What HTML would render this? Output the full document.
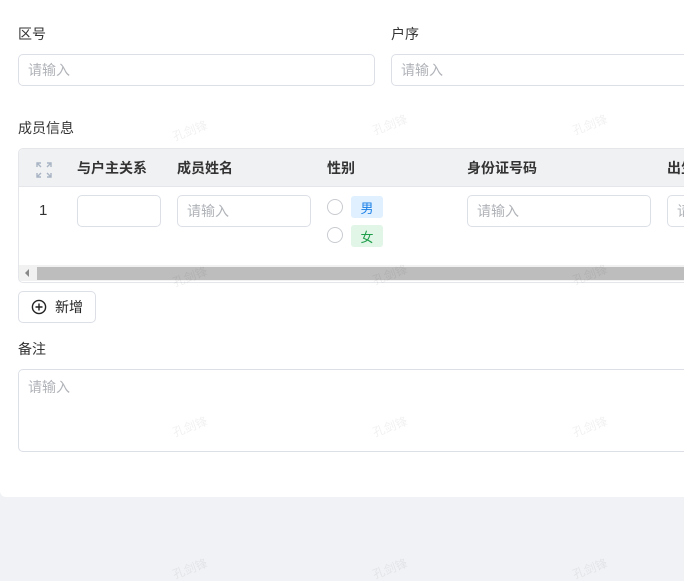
<!DOCTYPE html>
<html><head><meta charset="utf-8"><style>
*{box-sizing:border-box;margin:0;padding:0}
html,body{width:684px;height:581px;overflow:hidden}
body{background:#f0f2f5;font-family:"Liberation Sans","Noto Sans CJK SC",sans-serif;font-size:14px;color:#333}
#wrap{position:relative;width:684px;height:581px;overflow:hidden}
.card{position:absolute;left:0;top:0;width:684px;height:497px;background:#fff;border-radius:0 0 0 6px}
.abs{position:absolute}
.lbl{position:absolute;font-size:14px;color:#333;line-height:20px;white-space:nowrap}
.inp{position:absolute;border:1px solid #dcdfe6;border-radius:5px;background:#fff;color:#b0b3b8;font-size:14px;padding-left:9px;display:flex;align-items:center;white-space:nowrap;overflow:hidden}
.th{position:absolute;top:158px;font-weight:bold;font-size:14px;color:#333;line-height:20px;white-space:nowrap}
.radio{position:absolute;left:327px;width:16px;height:16px;border:1px solid #c8cbd0;border-radius:50%;background:#fff}
.tag{position:absolute;left:351px;width:32px;height:22px;border-radius:3px;font-size:13px;display:flex;align-items:center;justify-content:center}
.wm{position:absolute;color:rgba(0,0,0,0.06);font-size:12px;transform:rotate(-20deg);white-space:nowrap}
</style></head><body><div id="wrap">
<div class="card"></div>
<div class="lbl" style="left:18px;top:24px">区号</div>
<div class="inp" style="left:18px;top:54px;width:357px;height:32px">请输入</div>
<div class="lbl" style="left:391px;top:24px">户序</div>
<div class="inp" style="left:391px;top:54px;width:320px;height:32px">请输入</div>
<div class="lbl" style="left:18px;top:118px">成员信息</div>

<div class="abs" style="left:18px;top:148px;width:700px;height:135px;border:1px solid #e4e6ea;border-radius:5px;overflow:hidden;background:#fff">
  <div class="abs" style="left:0;top:0;width:700px;height:38px;background:#f0f1f3;border-bottom:1px solid #e4e6ea"></div>
  <div class="abs" style="left:0;top:116px;width:700px;height:16px;background:#f1f1f1"></div>
  <div class="abs" style="left:18px;top:118px;width:700px;height:13px;background:#bdbdbd"></div>
  <div class="abs" style="left:6px;top:120px;width:0;height:0;border-top:4px solid transparent;border-bottom:4px solid transparent;border-right:4px solid #888"></div>
</div>
<svg class="abs" style="left:36px;top:162px" width="16" height="16" viewBox="0 0 16 16" fill="none" stroke="#a8b4c4" stroke-width="1.4">
<path d="M1 5V1h4M1 1l4 4M11 1h4v4M15 1l-4 4M1 11v4h4M1 15l4-4M15 11v4h-4M15 15l-4-4"/></svg>
<div class="th" style="left:77px">与户主关系</div>
<div class="th" style="left:177px">成员姓名</div>
<div class="th" style="left:327px">性别</div>
<div class="th" style="left:467px">身份证号码</div>
<div class="th" style="left:667px">出生日期</div>

<div class="lbl" style="left:39px;top:201px;font-size:15px">1</div>
<div class="inp" style="left:77px;top:195px;width:84px;height:32px"></div>
<div class="inp" style="left:177px;top:195px;width:134px;height:32px">请输入</div>
<div class="radio" style="top:199px"></div>
<div class="radio" style="top:227px"></div>
<div class="tag" style="top:196px;background:#e0f0ff;color:#1a7fe6">男</div>
<div class="tag" style="top:225px;background:#e1f6e7;color:#1e9e4a">女</div>
<div class="inp" style="left:467px;top:195px;width:184px;height:32px">请输入</div>
<div class="inp" style="left:667px;top:195px;width:100px;height:32px">请输入</div>

<div class="abs" style="left:18px;top:291px;width:78px;height:32px;border:1px solid #dcdfe6;border-radius:5px;background:#fff"></div>
<svg class="abs" style="left:31px;top:299px" width="16" height="16" viewBox="0 0 16 16" fill="none" stroke="#222" stroke-width="1.4"><circle cx="8" cy="8" r="6.6"/><path d="M8 4.5v7M4.5 8h7"/></svg>
<div class="lbl" style="left:55px;top:297px;color:#222">新增</div>

<div class="lbl" style="left:18px;top:339px">备注</div>
<div class="abs" style="left:18px;top:369px;width:700px;height:83px;border:1px solid #dcdfe6;border-radius:5px;color:#b0b3b8;padding:7px 9px">请输入</div>

<div class="wm" style="left:172px;top:122px">孔剑锋</div>
<div class="wm" style="left:372px;top:116px">孔剑锋</div>
<div class="wm" style="left:572px;top:116px">孔剑锋</div>
<div class="wm" style="left:172px;top:268px">孔剑锋</div>
<div class="wm" style="left:372px;top:266px">孔剑锋</div>
<div class="wm" style="left:572px;top:266px">孔剑锋</div>
<div class="wm" style="left:172px;top:418px">孔剑锋</div>
<div class="wm" style="left:372px;top:418px">孔剑锋</div>
<div class="wm" style="left:572px;top:418px">孔剑锋</div>
<div class="wm" style="left:172px;top:560px">孔剑锋</div>
<div class="wm" style="left:372px;top:560px">孔剑锋</div>
<div class="wm" style="left:572px;top:560px">孔剑锋</div>
</div></body></html>
